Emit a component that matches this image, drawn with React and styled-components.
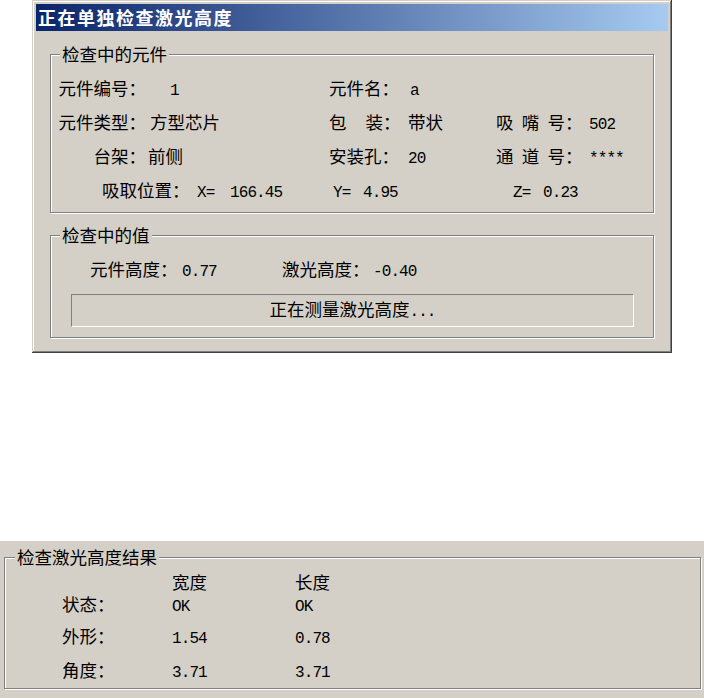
import React from "react";
import styled, { createGlobalStyle } from "styled-components";

const FACE = "#d4d0c8";

const GlobalStyle = createGlobalStyle`
  html, body { margin: 0; padding: 0; background: #fff; }
  body {
    font-family: "Noto Sans CJK SC", "Noto Sans", sans-serif;
    color: #000;
  }
`;

const Page = styled.div`
  width: 704px;
  height: 698px;
  display: flex;
  flex-direction: column;
`;

const Window = styled.section`
  box-sizing: border-box;
  width: 640px;
  height: 353px;
  margin-left: 32px;
  padding: 4px;
  background: ${FACE};
  box-shadow: inset -1px -1px #404040, inset 1px 1px ${FACE},
    inset -2px -2px #808080, inset 2px 2px #fff;
  display: flex;
  flex-direction: column;
`;

const TitleBar = styled.header`
  height: 27px;
  line-height: 27px;
  padding-left: 2px;
  background: linear-gradient(to right, #0a246a, #a6caf0);
  color: #fff;
  font-weight: 700;
  font-size: 18px;
  letter-spacing: 1.5px;
  white-space: nowrap;
`;

const WindowBody = styled.div`
  padding: 0 14px;
  display: flex;
  flex-direction: column;
`;

const Group = styled.fieldset`
  margin: ${(p) => p.$margin || "0"};
  padding: ${(p) => p.$padding || "0"};
  border: 1px solid #808080;
  box-shadow: inset 1px 1px #fff, 1px 1px #fff;
  min-width: 0;
`;

const Legend = styled.legend`
  margin-left: ${(p) => p.$offset}px;
  padding: 0 2px;
  background: ${FACE};
  font-size: 17.5px;
  line-height: 20px;
  white-space: nowrap;
`;

const InfoRow = styled.div`
  display: grid;
  grid-template-columns: ${(p) => p.$cols};
  padding-left: ${(p) => p.$left}px;
  height: ${(p) => p.$h}px;
  align-items: baseline;
  align-content: center;
  font-size: 17.5px;
  line-height: 20px;
  white-space: nowrap;
`;

const Label = styled.span`
  text-align: ${(p) => (p.$right ? "right" : "left")};
`;

const Value = styled.span`
  padding-left: ${(p) => p.$indent || 0}px;
`;

const Num = styled.span`
  font-family: "Liberation Mono", "DejaVu Sans Mono", monospace;
  font-size: 16px;
  letter-spacing: -0.9px;
  padding-left: ${(p) => p.$indent || 0}px;
`;

const Spread = styled.span`
  display: inline-flex;
  justify-content: space-between;
  width: ${(p) => p.$w}px;
`;

const SpreadLabel = ({ chars, w }) => (
  <Label>
    <Spread $w={w}>
      {chars.map((c, i) => (
        <span key={i}>{c}</span>
      ))}
    </Spread>
    ：
  </Label>
);

const StatusBox = styled.div`
  box-sizing: border-box;
  height: 33px;
  margin: 9px 19px 0 20px;
  border-top: 1px solid #808080;
  border-left: 1px solid #808080;
  border-bottom: 1px solid #fff;
  border-right: 1px solid #fff;
  display: flex;
  align-items: center;
  justify-content: center;
  font-size: 17.5px;
  line-height: 20px;
  white-space: nowrap;
`;

const Panel = styled.section`
  box-sizing: border-box;
  margin-top: 188px;
  height: 157px;
  background: ${FACE};
  padding: 6px 3px 0 4px;
`;

const MAIN_COLS = "88px 183px 79px 88px 93px auto";
const POS_COLS = "95px 33px 103px 30px 150px 30px auto";
const VAL_COLS = "92px 100px 91px auto";
const RES_COLS = "110px 123px auto";

export default function App() {
  return (
    <>
      <GlobalStyle />
      <Page>
        <Window>
          <TitleBar>正在单独检查激光高度</TitleBar>
          <WindowBody>
            <Group $margin="13px 0 0 0" $padding="8px 0 4px 0">
              <Legend $offset={9}>检查中的元件</Legend>
              <InfoRow $cols={MAIN_COLS} $left={7} $h={34}>
                <Label $right>元件编号：</Label>
                <Num $indent={24}>1</Num>
                <Label>元件名：</Label>
                <Num $indent={2}>a</Num>
              </InfoRow>
              <InfoRow $cols={MAIN_COLS} $left={7} $h={34}>
                <Label $right>元件类型：</Label>
                <Value $indent={4}>方型芯片</Value>
                <SpreadLabel chars={["包", "装"]} w={54} />
                <Value>带状</Value>
                <SpreadLabel chars={["吸", "嘴", "号"]} w={69} />
                <Num>502</Num>
              </InfoRow>
              <InfoRow $cols={MAIN_COLS} $left={7} $h={34}>
                <Label $right>台架：</Label>
                <Value $indent={2}>前侧</Value>
                <Label>安装孔：</Label>
                <Num>20</Num>
                <SpreadLabel chars={["通", "道", "号"]} w={69} />
                <Num>****</Num>
              </InfoRow>
              <InfoRow $cols={POS_COLS} $left={51} $h={34}>
                <Label>吸取位置：</Label>
                <Num>X=</Num>
                <Num>166.45</Num>
                <Num>Y=</Num>
                <Num>4.95</Num>
                <Num>Z=</Num>
                <Num>0.23</Num>
              </InfoRow>
            </Group>
            <Group $margin="12px 0 0 0" $padding="10px 0 10px 0">
              <Legend $offset={9}>检查中的值</Legend>
              <InfoRow $cols={VAL_COLS} $left={39} $h={30}>
                <Label>元件高度：</Label>
                <Num>0.77</Num>
                <Label>激光高度：</Label>
                <Num>-0.40</Num>
              </InfoRow>
              <StatusBox>
                <span>
                  正在测量激光高度<Num>...</Num>
                </span>
              </StatusBox>
            </Group>
          </WindowBody>
        </Window>
        <Panel>
          <Group $padding="7px 0 0 0">
            <Legend $offset={10}>检查激光高度结果</Legend>
            <InfoRow $cols={RES_COLS} $left={57} $h={16}>
              <span />
              <Label>宽度</Label>
              <Label>长度</Label>
            </InfoRow>
            <InfoRow $cols={RES_COLS} $left={57} $h={30}>
              <Label>状态：</Label>
              <Num>OK</Num>
              <Num>OK</Num>
            </InfoRow>
            <InfoRow $cols={RES_COLS} $left={57} $h={34}>
              <Label>外形：</Label>
              <Num>1.54</Num>
              <Num>0.78</Num>
            </InfoRow>
            <InfoRow $cols={RES_COLS} $left={57} $h={34}>
              <Label>角度：</Label>
              <Num>3.71</Num>
              <Num>3.71</Num>
            </InfoRow>
          </Group>
        </Panel>
      </Page>
    </>
  );
}
